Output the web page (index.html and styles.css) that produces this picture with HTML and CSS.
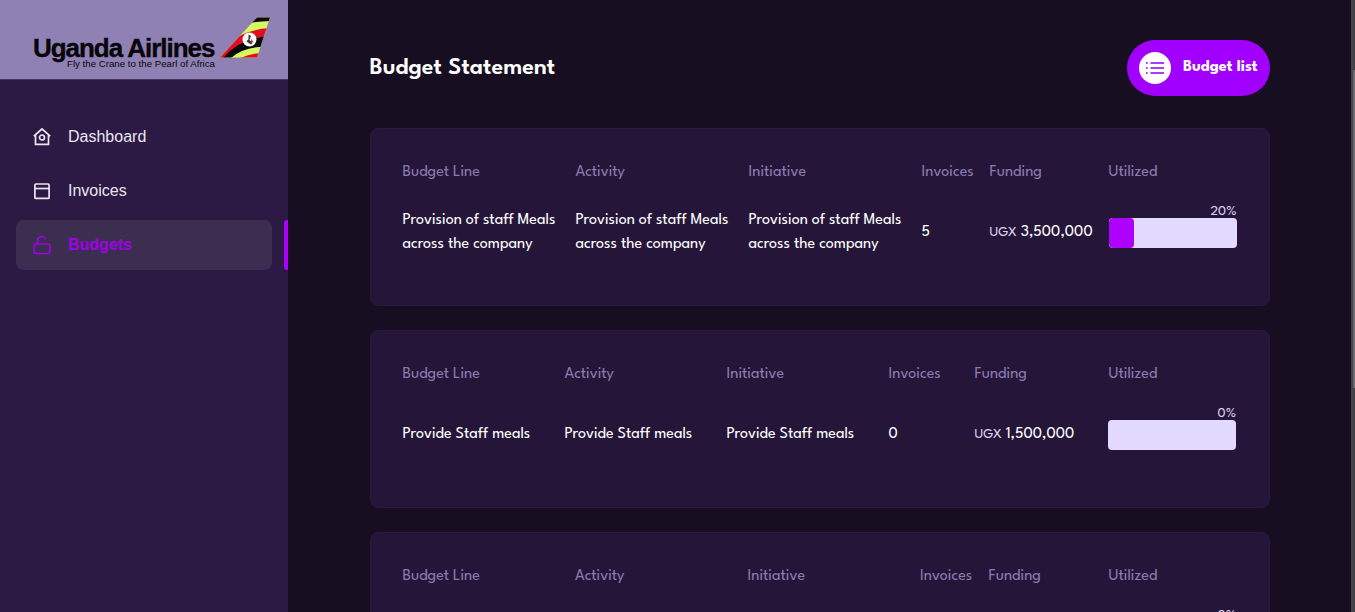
FILE: index.html
```html
<!DOCTYPE html>
<html lang="en">
<head>
<meta charset="utf-8">
<title>Budget Statement</title>
<link rel="stylesheet" href="styles.css">
</head>
<body>
<div class="app">
  <aside class="sidebar">
    <div class="brand">
      <svg width="288" height="79" viewBox="0 0 288 79">
        <text class="brand-name" x="33" y="56.800" textLength="182.500" lengthAdjust="spacing">Uganda Airlines</text>
        <text class="brand-tag" x="67" y="67.200" textLength="148" lengthAdjust="spacingAndGlyphs">Fly the Crane to the Pearl of Africa</text>
        <clipPath id="tail"><path d="M220 57.5 L257 17.5 H270 L257 57.5Z"/></clipPath>
        <g clip-path="url(#tail)">
          <rect x="218" y="15" width="54" height="45" fill="#d8f861"/>
          <path d="M250 23 Q261 21 272 21 V14 H250Z" fill="#0b0a0c"/>
          <path d="M218 60 V42 L236 38 Q250 29 272 28 V36 Q248 37 236 49 L224 58Z" fill="#e30d20"/>
          <path d="M223 58 Q240 37 272 36 V47 Q246 45 231 58Z" fill="#0b0a0c"/>
          <path d="M240 58 Q252 53 264 53 V58Z" fill="#e30d20"/>
        </g>
        <circle cx="249.500" cy="39.500" r="7" fill="#fff"/>
        <path d="M248.500 34.500 L251 36 L249.500 40 L252.500 43 L251 44.500 L246.500 41.500 L248.500 39Z" fill="#353136"/>
        <path d="M251.500 39 L253.500 42.500 L251 42Z" fill="#e30d20"/>
      </svg>
    </div>
    <nav class="menu">
      <a class="menu-item">
        <svg class="menu-icon" viewBox="0 0 20 20"><path d="M1.800 9.200 10 2l8.200 7.200M3.500 8v9.300h13V8"/><circle cx="10" cy="10.500" r="2.500"/></svg>
        <span>Dashboard</span>
      </a>
      <a class="menu-item">
        <svg class="menu-icon" viewBox="0 0 20 20"><rect x="2.900" y="3" width="14.200" height="14.400" rx="1"/><path d="M2.900 7.500h14.200"/></svg>
        <span>Invoices</span>
      </a>
      <a class="menu-item menu-item-active">
        <svg class="menu-icon menu-icon-lock" viewBox="0 0 20 20"><rect x="2" y="9" width="16" height="9.500" rx="1.500"/><path d="M5.500 9V5.600a4.200 4.200 0 0 1 8-1.600"/></svg>
        <span>Budgets</span>
      </a>
    </nav>
  </aside>
  <main class="main">
    <header class="page-head">
      <h1 class="page-title">Budget Statement</h1>
      <button class="list-btn">
        <span class="list-btn-disc">
          <svg width="18" height="12" viewBox="0 0 18 12"><path d="M0 1h1.700M0 6h1.700M0 11h1.700M4.500 1H18M4.500 6H18M4.500 11H18"/></svg>
        </span>
        <span class="list-btn-label">Budget list</span>
      </button>
    </header>

    <section class="card cols-wide">
      <span class="label">Budget Line</span><span class="label">Activity</span><span class="label">Initiative</span><span class="label">Invoices</span><span class="label">Funding</span><span class="label">Utilized</span>
      <p class="value">Provision of staff Meals<br>across the company</p>
      <p class="value">Provision of staff Meals<br>across the company</p>
      <p class="value">Provision of staff Meals<br>across the company</p>
      <p class="value">5</p>
      <p class="value"><span class="currency">UGX</span><span class="amount">3,500,000</span></p>
      <div class="usage"><span class="percent">20%</span><div class="bar"><div class="bar-fill" style="width:19.600%"></div></div></div>
    </section>

    <section class="card cols-even">
      <span class="label">Budget Line</span><span class="label">Activity</span><span class="label">Initiative</span><span class="label">Invoices</span><span class="label">Funding</span><span class="label">Utilized</span>
      <p class="value">Provide Staff meals</p>
      <p class="value">Provide Staff meals</p>
      <p class="value">Provide Staff meals</p>
      <p class="value">0</p>
      <p class="value"><span class="currency">UGX</span><span class="amount">1,500,000</span></p>
      <div class="usage"><span class="percent">0%</span><div class="bar"></div></div>
    </section>

    <section class="card cols-mid">
      <span class="label">Budget Line</span><span class="label">Activity</span><span class="label">Initiative</span><span class="label">Invoices</span><span class="label">Funding</span><span class="label">Utilized</span>
      <p class="value"></p><p class="value"></p><p class="value"></p><p class="value"></p><p class="value"></p>
      <div class="usage"><span class="percent">0%</span><div class="bar"></div></div>
    </section>
  </main>
  <div class="scroll-track"><div class="scroll-thumb"></div></div>
</div>
</body>
</html>
```
FILE: styles.css
```css
* { box-sizing: border-box; }
body { margin: 0; background: #170f21; font-family: "League Spartan", Lato, sans-serif; color: #fff; overflow: hidden; }
.app { display: flex; height: 612px; overflow: hidden; }

.sidebar { flex: 0 0 288px; background: #2c1a45; font-family: "Liberation Sans", Arial, sans-serif; }
.brand { height: 80px; background: #9081b4; border-bottom: 1px solid #47355f; }
.brand svg { display: block; }
.brand-name { font: bold 26px "Liberation Sans", Arial, sans-serif; fill: #07060a; stroke: #07060a; stroke-width: .4px; }
.brand-tag { font: 9.5px "Liberation Sans", Arial, sans-serif; fill: #07060a; }
.menu { display: flex; flex-direction: column; gap: 4px; padding: 32px 16px 0; }
.menu-item { display: flex; align-items: center; gap: 16px; height: 50px; padding: 0 16px; border-radius: 8px; font-size: 16px; line-height: 24px; color: #eae6f0; position: relative; }
.menu-item span { padding-bottom: 1px; }
.menu-icon { width: 20px; height: 20px; fill: none; stroke: currentColor; stroke-width: 1.7; }
.menu-icon-lock { stroke-width: 1.6; }
.menu-item-active { background: #3c2e51; color: #a100e8; font-weight: bold; }
.menu-item-active::after { content: ""; position: absolute; right: -16px; top: 0; width: 4px; height: 50px; background: #ab00ff; border-radius: 3px 0 0 3px; }

.main { flex: 1; padding: 40px 81px 0 82px; display: flex; flex-direction: column; gap: 24px; }
.page-head { display: flex; justify-content: space-between; align-items: center; height: 56px; margin-bottom: 8px; }
.page-title { margin: 0 0 0 -.5px; padding-bottom: 1px; font-size: 24px; line-height: 28px; font-weight: 600; }
.list-btn { display: flex; align-items: center; gap: 12px; width: 143px; height: 56px; padding: 0 0 0 12px; border: 0; border-radius: 28px; background: #a100ff; color: #fff; font-family: inherit; }
.list-btn-disc { display: flex; align-items: center; justify-content: center; width: 32px; height: 32px; border-radius: 50%; background: #fff; }
.list-btn-disc svg { fill: none; stroke: #a63cff; stroke-width: 1.9; }
.list-btn-label { font-size: 16px; font-weight: 700; white-space: nowrap; padding-bottom: 2px; }

.card { flex: 0 0 178px; display: grid; grid-template-rows: 20px 48px; row-gap: 26px; align-content: start; padding: 34px 31px 0 31.5px; border: 1px solid #291840; border-radius: 8px; background: #251639; white-space: nowrap; }
.cols-wide { grid-template-columns: 173px 173px 173px 68px 119px 1fr; }
.cols-even { grid-template-columns: 162px 162px 162px 86px 134px 1fr; }
.cols-mid { grid-template-columns: 172.5px 172.5px 172.5px 68.5px 120px 1fr; }
.label { font-size: 16px; line-height: 20px; color: #8b7bb0; }
.value { margin: 0; align-self: center; font-size: 16px; line-height: 24px; }
.currency { font-size: 14px; color: #dcd2ee; margin-right: 4px; }
.usage { display: flex; flex-direction: column; width: 128px; margin-top: -7px; margin-left: -.5px; }
.cols-wide .usage { margin-left: .5px; }
.percent { align-self: flex-end; font-size: 14px; line-height: 20px; height: 16px; color: #dcd2ee; }
.cols-wide .percent { margin-right: .5px; }
.bar { height: 30px; flex: none; border-radius: 4px; background: #e2dbff; overflow: hidden; }
.bar-fill { height: 100%; border-radius: 4px; background: #ae00ff; }

.scroll-track { flex: 0 0 4px; padding: 70px 0 0 2px; background: linear-gradient(90deg, #484848 2px, #424242 2px); }
.scroll-thumb { height: 318px; background: #696b6b; }
```
